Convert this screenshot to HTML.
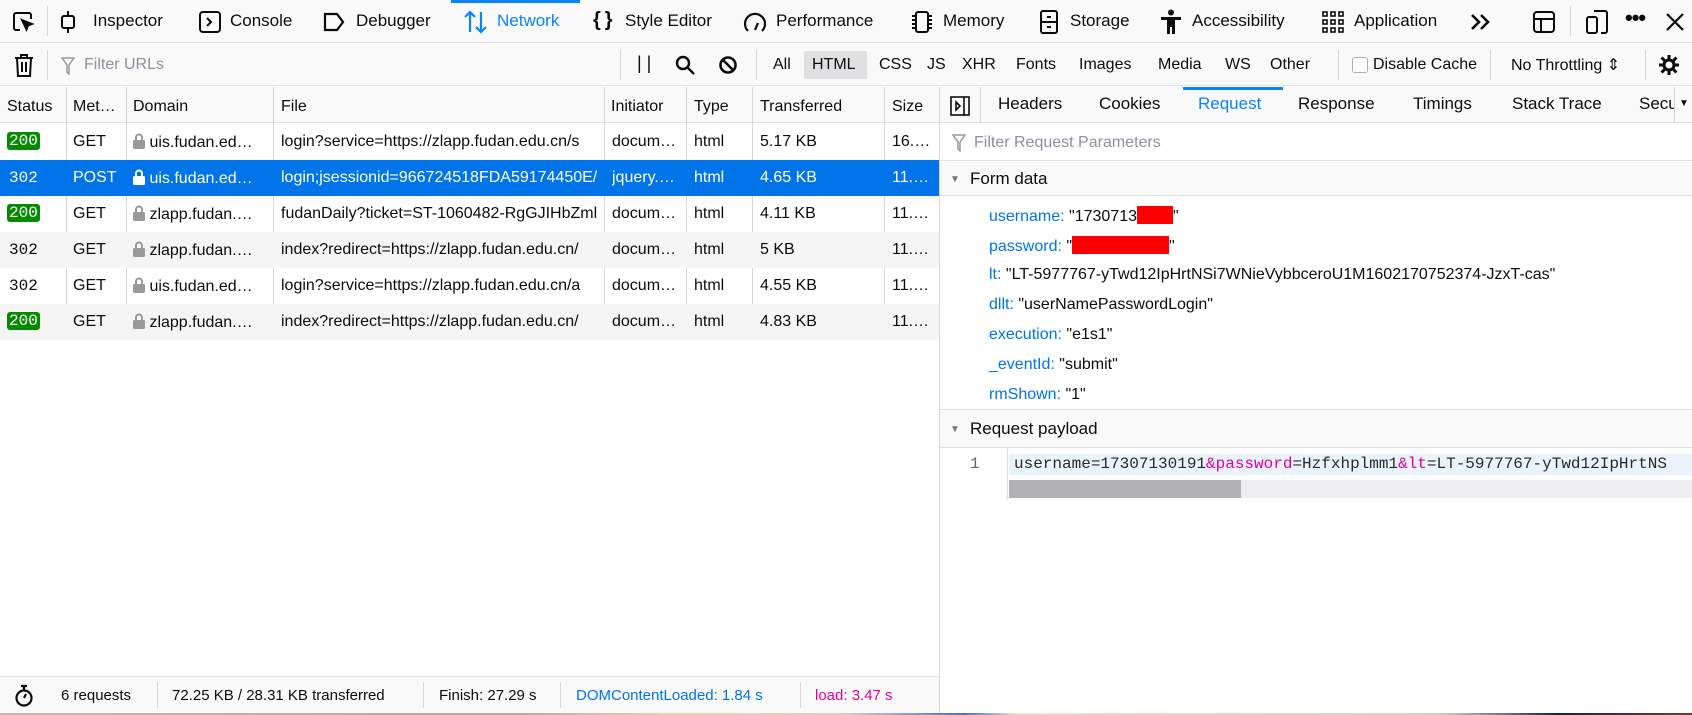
<!DOCTYPE html>
<html><head><meta charset="utf-8"><style>
*{box-sizing:border-box;margin:0;padding:0}
body{width:1692px;height:715px;overflow:hidden;background:#fff;font-family:"Liberation Sans","DejaVu Sans",sans-serif;color:#0c0c0d;position:relative}
.a{position:absolute;white-space:nowrap}
.t{font-size:17px;top:11px}
.f{font-size:16px}
.ic{position:absolute}
.sep{position:absolute;width:1px;background:#d7d7db}
.row{position:absolute;left:0;width:939px;height:36px;font-size:16px}
.row span{position:absolute;top:9px;white-space:nowrap;overflow:hidden}
.b200{background:#058b00;color:#fff;border-radius:3px;font-family:"Liberation Mono",monospace;padding:0 2px;font-size:16px;line-height:19px}
.st{font-family:"Liberation Mono",monospace}
.lk{display:inline-block;width:12px;height:16px;vertical-align:-2px;fill:#999}
.w .lk{fill:#fff}
.k{color:#0074e8}
</style></head><body>
<svg width="0" height="0" style="position:absolute"><defs><symbol id="lk" viewBox="0 0 12 16"><path d="M2 7V4.5a4 4 0 0 1 8 0V7h-2V4.5a2 2 0 0 0-4 0V7z"/><rect x="0" y="7" width="12" height="9" rx="1.5"/></symbol></defs></svg>
<!-- top toolbar -->
<div class="a" style="left:0;top:0;width:1692px;height:43px;background:#f9f9fa;border-bottom:1px solid #e0e0e2"></div>
<div class="a" style="left:451px;top:0;width:129px;height:3px;background:#0a84ff"></div>
<svg class="ic" style="left:11px;top:10px" width="24" height="24" viewBox="0 0 24 24" fill="none" stroke="#0c0c0d" stroke-width="2"><path d="M9 20H5a2 2 0 0 1-2-2V5a2 2 0 0 1 2-2h13a2 2 0 0 1 2 2v4"/><path d="M11 10l10 4-4 1.5-1.5 4z" fill="#0c0c0d"/></svg>
<div class="sep" style="left:47px;top:6px;height:30px"></div>
<svg class="ic" style="left:58px;top:11px" width="20" height="22" viewBox="0 0 20 22" fill="none" stroke="#0c0c0d" stroke-width="2"><rect x="4" y="5" width="12" height="12" rx="2"/><path d="M10 0v5M10 17v5"/></svg>
<div class="a t" style="left:93px">Inspector</div>
<svg class="ic" style="left:199px;top:11px" width="22" height="22" viewBox="0 0 22 22" fill="none" stroke="#0c0c0d" stroke-width="2"><rect x="1" y="1" width="20" height="20" rx="3"/><path d="M8 7l4 4-4 4"/></svg>
<div class="a t" style="left:230px">Console</div>
<svg class="ic" style="left:323px;top:12px" width="22" height="20" viewBox="0 0 22 20" fill="none" stroke="#0c0c0d" stroke-width="2.2"><path d="M2 2h12l6 8-6 8H2z"/></svg>
<div class="a t" style="left:356px">Debugger</div>
<svg class="ic" style="left:463px;top:10px" width="26" height="24" viewBox="0 0 26 24" fill="none" stroke="#0a84ff" stroke-width="2.2"><path d="M7 22V2M2 7l5-5 5 5M18 2v20M13 17l5 5 5-5"/></svg>
<div class="a t" style="left:497px;color:#0a84ff">Network</div>
<div class="a" style="left:593px;top:9px;font-size:20px;font-weight:bold">{&thinsp;}</div>
<div class="a t" style="left:625px">Style Editor</div>
<svg class="ic" style="left:743px;top:10px" width="24" height="24" viewBox="0 0 24 24" fill="none" stroke="#0c0c0d" stroke-width="2.2"><path d="M5 21A10 10 0 1 1 19 21"/><path d="M12 20l3-7"/></svg>
<div class="a t" style="left:776px">Performance</div>
<svg class="ic" style="left:910px;top:10px" width="24" height="24" viewBox="0 0 24 24" fill="none" stroke="#0c0c0d" stroke-width="2"><rect x="6" y="2" width="12" height="20" rx="2"/><path d="M2 6h4M2 10h4M2 14h4M2 18h4M18 6h4M18 10h4M18 14h4M18 18h4"/></svg>
<div class="a t" style="left:943px">Memory</div>
<svg class="ic" style="left:1039px;top:10px" width="20" height="24" viewBox="0 0 20 24" fill="none" stroke="#0c0c0d" stroke-width="2"><rect x="2" y="1" width="16" height="22" rx="2"/><path d="M2 12h16M8 7h4M8 17h4"/></svg>
<div class="a t" style="left:1070px">Storage</div>
<svg class="ic" style="left:1160px;top:9px" width="22" height="26" viewBox="0 0 22 26" fill="#0c0c0d"><circle cx="11" cy="3.5" r="3"/><path d="M1 8h20v3h-6v14h-3v-7h-2v7H7V11H1z"/></svg>
<div class="a t" style="left:1192px">Accessibility</div>
<svg class="ic" style="left:1322px;top:11px" width="22" height="22" viewBox="0 0 22 22" fill="none" stroke="#0c0c0d" stroke-width="1.6"><rect x="1" y="1" width="4" height="4"/><rect x="9" y="1" width="4" height="4"/><rect x="17" y="1" width="4" height="4"/><rect x="1" y="9" width="4" height="4"/><rect x="9" y="9" width="4" height="4"/><rect x="17" y="9" width="4" height="4"/><rect x="1" y="17" width="4" height="4"/><rect x="9" y="17" width="4" height="4"/><rect x="17" y="17" width="4" height="4"/></svg>
<div class="a t" style="left:1354px">Application</div>
<svg class="ic" style="left:1470px;top:13px" width="22" height="18" viewBox="0 0 22 18" fill="none" stroke="#0c0c0d" stroke-width="2.6"><path d="M2 2l7 7-7 7M11 2l7 7-7 7"/></svg>
<svg class="ic" style="left:1532px;top:11px" width="24" height="22" viewBox="0 0 24 22" fill="none" stroke="#0c0c0d" stroke-width="2"><rect x="2" y="1" width="20" height="20" rx="3"/><path d="M2 8h20M9 8v13"/></svg>
<div class="sep" style="left:1570px;top:6px;height:30px"></div>
<svg class="ic" style="left:1585px;top:9px" width="24" height="26" viewBox="0 0 24 26" fill="none" stroke="#0c0c0d" stroke-width="2"><rect x="2" y="8" width="10" height="16" rx="2"/><path d="M9 2h11a2 2 0 0 1 2 2v18a2 2 0 0 1-2 2h-4"/></svg>
<div class="a" style="left:1625px;top:5px;font-size:22px;font-weight:bold;letter-spacing:-1px">•••</div>
<svg class="ic" style="left:1665px;top:12px" width="20" height="20" viewBox="0 0 20 20" stroke="#0c0c0d" stroke-width="2.2"><path d="M2 2l16 16M18 2L2 18"/></svg>

<!-- filter toolbar -->
<div class="a" style="left:0;top:44px;width:1692px;height:42px;background:#f9f9fa;border-bottom:1px solid #e0e0e2"></div>
<svg class="ic" style="left:14px;top:53px" width="20" height="25" viewBox="0 0 20 25" fill="none" stroke="#0c0c0d" stroke-width="2"><path d="M1 5h18M7 5V2h6v3M3 5l1 18h12l1-18M8 9v10M12 9v10"/></svg>
<div class="sep" style="left:47px;top:50px;height:30px"></div>
<svg class="ic" style="left:61px;top:57px" width="14" height="18" viewBox="0 0 14 18" fill="none" stroke="#999" stroke-width="1.5"><path d="M1 1h12L8 8v9l-2-2V8z"/></svg>
<div class="a f" style="left:84px;top:56px;color:#8f8f9d">Filter URLs</div>
<div class="sep" style="left:620px;top:50px;height:30px"></div>
<div class="a" style="left:637px;top:53px;font-size:18px">| |</div>
<svg class="ic" style="left:675px;top:55px" width="20" height="20" viewBox="0 0 20 20" fill="none" stroke="#0c0c0d" stroke-width="2.4"><circle cx="8" cy="8" r="6"/><path d="M12.5 12.5L19 19"/></svg>
<svg class="ic" style="left:718px;top:55px" width="20" height="20" viewBox="0 0 20 20" fill="none" stroke="#0c0c0d" stroke-width="2.6"><circle cx="10" cy="10" r="7.5"/><path d="M5 5l10 10"/></svg>
<div class="sep" style="left:756px;top:50px;height:30px"></div>
<div class="a f" style="left:773px;top:56px">All</div>
<div class="a" style="left:804px;top:51px;width:63px;height:28px;background:#e0e0e2;border-radius:2px"></div>
<div class="a f" style="left:812px;top:56px">HTML</div>
<div class="a f" style="left:879px;top:56px">CSS</div>
<div class="a f" style="left:927px;top:56px">JS</div>
<div class="a f" style="left:962px;top:56px">XHR</div>
<div class="a f" style="left:1016px;top:56px">Fonts</div>
<div class="a f" style="left:1079px;top:56px">Images</div>
<div class="a f" style="left:1158px;top:56px">Media</div>
<div class="a f" style="left:1225px;top:56px">WS</div>
<div class="a f" style="left:1270px;top:56px">Other</div>
<div class="sep" style="left:1338px;top:50px;height:30px"></div>
<div class="a" style="left:1352px;top:57px;width:16px;height:16px;border:1px solid #b1b1b3;border-radius:3px;background:#fff"></div>
<div class="a f" style="left:1373px;top:56px">Disable Cache</div>
<div class="sep" style="left:1490px;top:50px;height:30px"></div>
<div class="a f" style="left:1511px;top:55px">No Throttling ⇕</div>
<div class="sep" style="left:1645px;top:50px;height:30px"></div>
<svg class="ic" style="left:1657px;top:53px" width="24" height="24" viewBox="0 0 24 24" fill="none" stroke="#0c0c0d" stroke-width="3"><circle cx="12" cy="12" r="5"/><path d="M12 2v5M12 17v5M2 12h5M17 12h5M4.5 4.5l3.5 3.5M16 16l3.5 3.5M4.5 19.5L8 16M16 8l3.5-3.5"/></svg>

<!-- table header -->
<div class="a" style="left:0;top:87px;width:939px;height:36px;background:#f9f9fa;border-bottom:1px solid #e0e0e2"></div>
<div class="a f" style="left:7px;top:98px">Status</div>
<div class="a f" style="left:73px;top:98px">Met…</div>
<div class="a f" style="left:133px;top:98px">Domain</div>
<div class="a f" style="left:281px;top:98px">File</div>
<div class="a f" style="left:611px;top:98px">Initiator</div>
<div class="a f" style="left:694px;top:98px">Type</div>
<div class="a f" style="left:760px;top:98px">Transferred</div>
<div class="a f" style="left:892px;top:98px">Size</div>
<div class="sep" style="left:66px;top:87px;height:253px"></div>
<div class="sep" style="left:126px;top:87px;height:253px"></div>
<div class="sep" style="left:273px;top:87px;height:253px"></div>
<div class="sep" style="left:604px;top:87px;height:253px"></div>
<div class="sep" style="left:686px;top:87px;height:253px"></div>
<div class="sep" style="left:752px;top:87px;height:253px"></div>
<div class="sep" style="left:884px;top:87px;height:253px"></div>

<div class="row" style="top:124px"><span style="left:7px;top:8px"><span class="b200" style="position:static">200</span></span><span style="left:73px">GET</span><span style="left:133px;width:136px"><svg class="lk"><use href="#lk"/></svg> uis.fudan.ed…</span><span style="left:281px;width:321px">login?service=https://zlapp.fudan.edu.cn/s</span><span style="left:612px">docum…</span><span style="left:694px">html</span><span style="left:760px">5.17 KB</span><span style="left:892px">16.…</span></div>
<div class="row w" style="top:160px;background:#0074e8;color:#fff"><span style="left:9px" class="st">302</span><span style="left:73px">POST</span><span style="left:133px;width:136px"><svg class="lk"><use href="#lk"/></svg> uis.fudan.ed…</span><span style="left:281px;width:321px">login;jsessionid=966724518FDA59174450E/</span><span style="left:612px">jquery.…</span><span style="left:694px">html</span><span style="left:760px">4.65 KB</span><span style="left:892px">11.…</span></div>
<div class="row" style="top:196px"><span style="left:7px;top:8px"><span class="b200" style="position:static">200</span></span><span style="left:73px">GET</span><span style="left:133px;width:136px"><svg class="lk"><use href="#lk"/></svg> zlapp.fudan.…</span><span style="left:281px;width:321px">fudanDaily?ticket=ST-1060482-RgGJIHbZml</span><span style="left:612px">docum…</span><span style="left:694px">html</span><span style="left:760px">4.11 KB</span><span style="left:892px">11.…</span></div>
<div class="row" style="top:232px;background:#f5f5f5"><span style="left:9px" class="st">302</span><span style="left:73px">GET</span><span style="left:133px;width:136px"><svg class="lk"><use href="#lk"/></svg> zlapp.fudan.…</span><span style="left:281px;width:321px">index?redirect=https://zlapp.fudan.edu.cn/</span><span style="left:612px">docum…</span><span style="left:694px">html</span><span style="left:760px">5 KB</span><span style="left:892px">11.…</span></div>
<div class="row" style="top:268px"><span style="left:9px" class="st">302</span><span style="left:73px">GET</span><span style="left:133px;width:136px"><svg class="lk"><use href="#lk"/></svg> uis.fudan.ed…</span><span style="left:281px;width:321px">login?service=https://zlapp.fudan.edu.cn/a</span><span style="left:612px">docum…</span><span style="left:694px">html</span><span style="left:760px">4.55 KB</span><span style="left:892px">11.…</span></div>
<div class="row" style="top:304px;background:#f5f5f5"><span style="left:7px;top:8px"><span class="b200" style="position:static">200</span></span><span style="left:73px">GET</span><span style="left:133px;width:136px"><svg class="lk"><use href="#lk"/></svg> zlapp.fudan.…</span><span style="left:281px;width:321px">index?redirect=https://zlapp.fudan.edu.cn/</span><span style="left:612px">docum…</span><span style="left:694px">html</span><span style="left:760px">4.83 KB</span><span style="left:892px">11.…</span></div>

<!-- status bar -->
<div class="a" style="left:0;top:676px;width:939px;height:37px;background:#f9f9fa;border-top:1px solid #e0e0e2"></div>
<svg class="ic" style="left:15px;top:684px" width="18" height="24" viewBox="0 0 18 24" fill="none" stroke="#0c0c0d" stroke-width="2.2"><circle cx="9" cy="14" r="7.5"/><path d="M6 2h6M9 2v4M9 14l2-4"/></svg>
<div class="a f" style="left:61px;top:687px;font-size:15px">6 requests</div>
<div class="sep" style="left:157px;top:682px;height:26px"></div>
<div class="a f" style="left:172px;top:687px;font-size:15px">72.25 KB / 28.31 KB transferred</div>
<div class="sep" style="left:423px;top:682px;height:26px"></div>
<div class="a f" style="left:439px;top:687px;font-size:15px">Finish: 27.29 s</div>
<div class="sep" style="left:560px;top:682px;height:26px"></div>
<div class="a f" style="left:576px;top:687px;font-size:15px;color:#0074e8">DOMContentLoaded: 1.84 s</div>
<div class="sep" style="left:800px;top:682px;height:26px"></div>
<div class="a f" style="left:815px;top:687px;font-size:15px;color:#dd00a9">load: 3.47 s</div>
<div class="a" style="left:0;top:713px;width:1692px;height:2px;background:linear-gradient(90deg,#c9b9b4,#b8a8a0 30%,#e8d8b0 40%,#d9cfc6 50%,#5a66c0 57%,#e9e0d0 60%,#d8d0c8 85%,#202040 92%,#6a4038)"></div>

<div class="sep" style="left:939px;top:87px;height:626px;background:#d7d7db"></div>

<!-- right panel tabs -->
<div class="a" style="left:940px;top:87px;width:752px;height:36px;background:#f9f9fa;border-bottom:1px solid #e0e0e2"></div>
<svg class="ic" style="left:950px;top:96px" width="20" height="20" viewBox="0 0 20 20" fill="none" stroke="#0c0c0d" stroke-width="1.6"><rect x="1" y="1" width="18" height="18"/><path d="M14 1v18M6 6l4 4-4 4z"/></svg>
<div class="sep" style="left:980px;top:87px;height:36px"></div>
<div class="a t" style="left:998px;top:94px">Headers</div>
<div class="a t" style="left:1099px;top:94px">Cookies</div>
<div class="a" style="left:1183px;top:87px;width:100px;height:3px;background:#0a84ff"></div>
<div class="a t" style="left:1198px;top:94px;color:#0a84ff">Request</div>
<div class="a t" style="left:1298px;top:94px">Response</div>
<div class="a t" style="left:1413px;top:94px">Timings</div>
<div class="a t" style="left:1512px;top:94px">Stack Trace</div>
<div class="a" style="left:1639px;top:87px;width:36px;height:36px;overflow:hidden"><div class="a t" style="left:0;top:7px">Security</div></div>
<div class="sep" style="left:1674px;top:87px;height:36px"></div>
<div class="a" style="left:1679px;top:98px;font-size:10px">▼</div>
<!-- filter params -->
<div class="a" style="left:940px;top:124px;width:752px;height:37px;border-bottom:1px solid #e0e0e2"></div>
<svg class="ic" style="left:952px;top:134px" width="14" height="18" viewBox="0 0 14 18" fill="none" stroke="#999" stroke-width="1.5"><path d="M1 1h12L8 8v9l-2-2V8z"/></svg>
<div class="a f" style="left:974px;top:134px;color:#8f8f9d">Filter Request Parameters</div>
<!-- form data -->
<div class="a" style="left:940px;top:162px;width:752px;height:34px;background:#f9f9fa;border-bottom:1px solid #e0e0e2"></div>
<div class="a" style="left:950px;top:174px;font-size:10px;color:#737373">▼</div>
<div class="a t" style="left:970px;top:169px">Form data</div>
<div class="a f" style="left:989px;top:206px"><span class="k">username:</span> "1730713<span style="display:inline-block;width:36px;height:18px;background:#f00;vertical-align:-3px"></span>"</div>
<div class="a f" style="left:989px;top:236px"><span class="k">password:</span> "<span style="display:inline-block;width:97px;height:18px;background:#f00;vertical-align:-3px"></span>"</div>
<div class="a f" style="left:989px;top:266px"><span class="k">lt:</span> "LT-5977767-yTwd12IpHrtNSi7WNieVybbceroU1M1602170752374-JzxT-cas"</div>
<div class="a f" style="left:989px;top:296px"><span class="k">dllt:</span> "userNamePasswordLogin"</div>
<div class="a f" style="left:989px;top:326px"><span class="k">execution:</span> "e1s1"</div>
<div class="a f" style="left:989px;top:356px"><span class="k">_eventId:</span> "submit"</div>
<div class="a f" style="left:989px;top:386px"><span class="k">rmShown:</span> "1"</div>
<!-- request payload -->
<div class="a" style="left:940px;top:409px;width:752px;height:39px;background:#f9f9fa;border-top:1px solid #e0e0e2;border-bottom:1px solid #e0e0e2"></div>
<div class="a" style="left:950px;top:424px;font-size:10px;color:#737373">▼</div>
<div class="a t" style="left:970px;top:419px">Request payload</div>
<div class="sep" style="left:1007px;top:448px;height:52px;background:#e0e0e2"></div>
<div class="a f" style="left:970px;top:455px;font-family:'Liberation Mono',monospace;color:#666">1</div>
<div class="a" style="left:1009px;top:454px;width:683px;height:21px;background:#eaf2fc"></div>
<div class="a" style="left:1014px;top:455px;font-family:'Liberation Mono',monospace;font-size:16px;color:#2a2a2e">username=17307130191<span style="color:#dd00a9">&amp;password</span>=Hzfxhplmm1<span style="color:#dd00a9">&amp;lt</span>=LT-5977767-yTwd12IpHrtNS</div>
<div class="a" style="left:1009px;top:480px;width:683px;height:18px;background:#ededf0"></div>
<div class="a" style="left:1009px;top:480px;width:232px;height:18px;background:#b1b1b3"></div>
</body></html>
